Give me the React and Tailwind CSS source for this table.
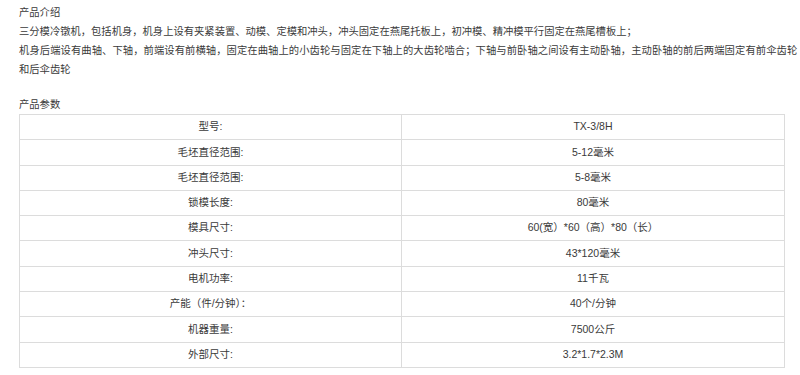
export default function App() {
  const rows = [
    ["型号:", "TX-3/8H"],
    ["毛坯直径范围:", "5-12毫米"],
    ["毛坯直径范围:", "5-8毫米"],
    ["锁模长度:", "80毫米"],
    ["模具尺寸:", "60(宽）*60（高）*80（长）"],
    ["冲头尺寸:", "43*120毫米"],
    ["电机功率:", "11千瓦"],
    ["产能（件/分钟）：", "40个/分钟"],
    ["机器重量:", "7500公斤"],
    ["外部尺寸:", "3.2*1.7*2.3M"],
  ];
  return (
    <div
      className="bg-white w-[800px] h-[375px] overflow-hidden pl-[19px] pt-[3px] text-[#3a3a3a] text-[10.5px]"
      style={{ fontFamily: '"Liberation Sans", "Noto Sans CJK SC", sans-serif' }}
    >
      <div className="leading-[19px] text-[10.3px]">
        <div>产品介绍</div>
        <div className="whitespace-nowrap">三分模冷镦机，包括机身，机身上设有夹紧装置、动模、定模和冲头，冲头固定在燕尾托板上，初冲模、精冲模平行固定在燕尾槽板上；</div>
        <div className="whitespace-nowrap tracking-[0.08px]">机身后端设有曲轴、下轴，前端设有前横轴，固定在曲轴上的小齿轮与固定在下轴上的大齿轮啮合；下轴与前卧轴之间设有主动卧轴，主动卧轴的前后两端固定有前伞齿轮</div>
        <div>和后伞齿轮</div>
      </div>
      <div className="mt-[16px] leading-[19px] text-[10.3px]">产品参数</div>
      <table className="w-[766px] border-collapse table-fixed">
        <tbody>
          {rows.map((r, i) => (
            <tr key={i} className="h-[25.3px]">
              <td className="border border-[#dcdcdc] text-center w-[382px] p-0">{r[0]}</td>
              <td className="border border-[#dcdcdc] text-center p-0">{r[1]}</td>
            </tr>
          ))}
        </tbody>
      </table>
    </div>
  );
}
